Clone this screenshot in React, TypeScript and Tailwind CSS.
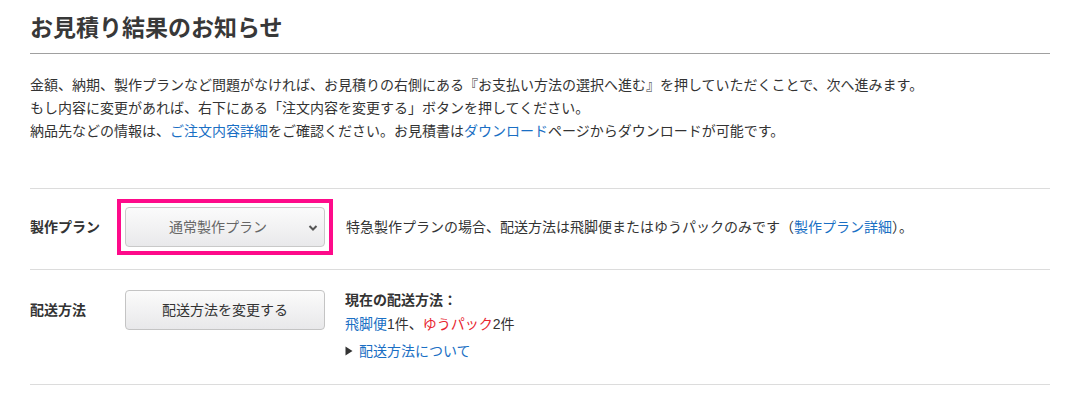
import React from "react";

const font = {
  fontFamily: '"Liberation Sans", "Noto Sans CJK JP", sans-serif',
};

export default function App() {
  return (
    <div className="min-h-[404px] w-[1070px] bg-white text-[#333] pl-[30px] pr-[20px] pt-[12px]" style={font}>
      <h2 className="text-[23px] font-bold leading-[33px] pb-[8px] border-b border-[#a0a0a0] text-[#383838]">
        お見積り結果のお知らせ
      </h2>
      <div className="mt-[20px] text-[14px] leading-[23px]">
        <p>
          金額、納期、製作プランなど問題がなければ、お見積りの右側にある『お支払い方法の選択へ進む』を押していただくことで、次へ進みます。
        </p>
        <p>もし内容に変更があれば、右下にある「注文内容を変更する」ボタンを押してください。</p>
        <p>
          納品先などの情報は、<a className="text-[#1a6fc4]">ご注文内容詳細</a>をご確認ください。お見積書は
          <a className="text-[#1a6fc4]">ダウンロード</a>ページからダウンロードが可能です。
        </p>
      </div>

      <div className="mt-[45px] border-t border-[#dcdcdc]" />

      {/* row 1 */}
      <div className="flex items-center pt-[10px] pb-[14px] border-b border-[#dcdcdc] text-[14px]">
        <div className="w-[87px] font-bold">製作プラン</div>
        <div className="border-4 border-[#fe0a8a] p-[4px]">
          <div className="relative flex h-[40px] w-[200px] items-center rounded-[4px] border border-[#c9c9c9] bg-gradient-to-b from-[#fbfbfb] to-[#e9e9eb]">
            <span className="flex-1 pr-[14px] text-center text-[#666]">通常製作プラン</span>
            <svg className="absolute right-[6px] top-[16px]" width="10" height="8" viewBox="0 0 10 8">
              <path d="M1.5 2 L5 5.5 L8.5 2" fill="none" stroke="#555" strokeWidth="2" />
            </svg>
          </div>
        </div>
        <div className="ml-[13px]">
          特急製作プランの場合、配送方法は飛脚便またはゆうパックのみです（<a className="text-[#1a6fc4]">製作プラン詳細</a>）。
        </div>
      </div>

      {/* row 2 */}
      <div className="flex items-start pt-[20px] pb-[21px] border-b border-[#dcdcdc] text-[14px]">
        <div className="flex h-[40px] w-[95px] items-center font-bold">配送方法</div>
        <div className="flex h-[40px] w-[200px] items-center justify-center rounded-[4px] border border-[#c4c4c4] bg-gradient-to-b from-[#fbfbfb] to-[#e8e8ea] text-[#333]">
          配送方法を変更する
        </div>
        <div className="ml-[20px] mt-[-2px] leading-[24px]">
          <div className="font-bold">現在の配送方法：</div>
          <div>
            <a className="text-[#1a6fc4]">飛脚便</a>1件、<a className="text-[#e8262f]">ゆうパック</a>2件
          </div>
          <div className="mt-[3px] flex items-center">
            <svg width="8" height="10" viewBox="0 0 8 10" className="mr-[6px]">
              <path d="M0.5 0.5 L7.5 5 L0.5 9.5 Z" fill="#333" />
            </svg>
            <a className="text-[#1a6fc4]">配送方法について</a>
          </div>
        </div>
      </div>
    </div>
  );
}
